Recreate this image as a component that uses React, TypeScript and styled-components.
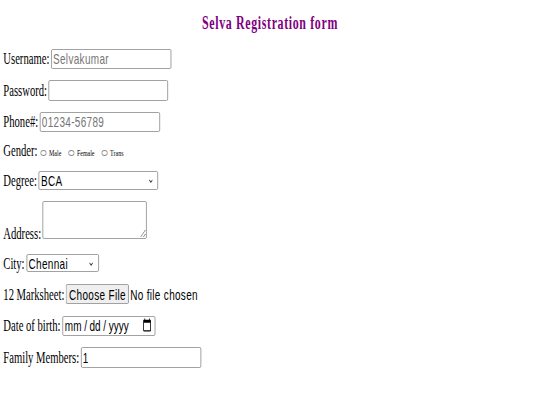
import React from "react";
import styled, { createGlobalStyle } from "styled-components";

const S = 0.664;

const Global = createGlobalStyle`
  html, body { margin: 0; padding: 0; background: #fff; overflow: hidden; }
  body { font-family: "Liberation Serif", "Times New Roman", serif; color: #000; }
`;

const Page = styled.div`
  width: ${540 / S}px;
  box-sizing: border-box;
  padding-top: 12px;
  transform: scaleX(${S});
  transform-origin: 0 0;
`;

const Title = styled.h2`
  margin: 0;
  font: bold 18px/22px "Liberation Serif", "Times New Roman", serif;
  letter-spacing: 0.95px;
  color: #800080;
  text-align: center;
`;

const Form = styled.form`
  display: flex;
  flex-direction: column;
  align-items: flex-start;
  padding-left: 5px;
`;

const Row = styled.div<{ $mt: number; $align?: string }>`
  display: flex;
  align-items: ${(p) => p.$align ?? "baseline"};
  gap: 2.5px;
  margin-top: ${(p) => p.$mt}px;
`;

const Label = styled.label<{ $drop?: boolean }>`
  font-size: 16px;
  line-height: normal;
  white-space: nowrap;
  margin-bottom: ${(p) => (p.$drop ? "-3.8px" : "0")};
`;

const controlFont = `
  font-family: "Liberation Sans", Arial, sans-serif;
  font-size: 15px;
  letter-spacing: 0.5px;
  color: #000;
`;

const TextInput = styled.input<{ $w: number; $h?: number }>`
  ${controlFont}
  box-sizing: border-box;
  width: ${(p) => p.$w}px;
  height: ${(p) => p.$h ?? 20.6}px;
  margin: 0;
  padding: 0 2px;
  border: 1px solid #8f8f8f;
  border-radius: 2px;
  background: #fff;
  &::placeholder {
    color: #757575;
  }
`;

const DateInput = styled(TextInput)`
  letter-spacing: 0;
  &::-webkit-datetime-edit-text {
    padding: 0 3px;
  }
`;

const SelectWrap = styled.span`
  position: relative;
  display: inline-flex;
`;

const Select = styled.select<{ $w: number }>`
  ${controlFont}
  appearance: none;
  box-sizing: border-box;
  width: ${(p) => p.$w}px;
  height: 18.6px;
  margin: 0;
  padding: 0 14px 0 2.5px;
  border: 1px solid #8f8f8f;
  border-radius: 2px;
  background: #fff;
`;

const Chevron = styled.svg`
  position: absolute;
  right: 8px;
  top: 50%;
  width: 6.5px;
  height: 4px;
  margin-top: -1.5px;
  pointer-events: none;
`;

const TextArea = styled.textarea`
  ${controlFont}
  box-sizing: border-box;
  width: 156.6px;
  height: 37.3px;
  margin: 0;
  padding: 2px;
  border: 1px solid #8f8f8f;
  border-radius: 2px;
`;

const FileInput = styled.input`
  ${controlFont}
  width: 200px;
  margin: 0;
  &::file-selector-button {
    font: inherit;
    letter-spacing: inherit;
    color: #000;
    box-sizing: border-box;
    height: 20.3px;
    padding: 0 3.5px;
    margin: 0 2px 0 0;
    border: 1px solid #8f8f8f;
    border-radius: 2px;
    background: #efefef;
  }
`;

const Options = styled.div`
  display: flex;
  align-items: baseline;
  gap: 11px;
  margin-left: 2.3px;
`;

const Option = styled.label`
  display: flex;
  align-items: baseline;
  gap: 4px;
  font-size: 9px;
  line-height: normal;
`;

const Radio = styled.input`
  appearance: none;
  box-sizing: border-box;
  width: 8.5px;
  height: 5.6px;
  margin: 0 0 0.3px 0;
  border: 1px solid #8c8c8c;
  border-radius: 50%;
  background: #fff;
`;

function Dropdown({
  id,
  width,
  value,
  options,
}: {
  id: string;
  width: number;
  value: string;
  options: string[];
}) {
  return (
    <SelectWrap>
      <Select id={id} $w={width} defaultValue={value}>
        {options.map((o) => (
          <option key={o}>{o}</option>
        ))}
      </Select>
      <Chevron viewBox="0 0 8 5">
        <polyline points="1,1 4,4 7,1" fill="none" stroke="#3a3a3a" strokeWidth="1.4" />
      </Chevron>
    </SelectWrap>
  );
}

export default function App() {
  return (
    <>
      <Global />
      <Page>
        <Title>Selva Registration form</Title>
        <Form onSubmit={(e) => e.preventDefault()}>
          <Row $mt={14.5}>
            <Label htmlFor="u">Username:</Label>
            <TextInput id="u" type="text" $w={181} placeholder="Selvakumar" />
          </Row>
          <Row $mt={10.9}>
            <Label htmlFor="p">Password:</Label>
            <TextInput id="p" type="password" $w={180} />
          </Row>
          <Row $mt={11}>
            <Label htmlFor="ph">Phone#:</Label>
            <TextInput id="ph" type="tel" $w={181} placeholder="01234-56789" />
          </Row>
          <Row $mt={9.5}>
            <Label>Gender:</Label>
            <Options>
              <Option>
                <Radio type="radio" name="g" value="male" />
                Male
              </Option>
              <Option>
                <Radio type="radio" name="g" value="female" />
                Female
              </Option>
              <Option>
                <Radio type="radio" name="g" value="trans" />
                Trans
              </Option>
            </Options>
          </Row>
          <Row $mt={11.5}>
            <Label htmlFor="d">Degree:</Label>
            <Dropdown id="d" width={180} value="BCA" options={["BCA", "BSc", "BE"]} />
          </Row>
          <Row $mt={11.3} $align="flex-end">
            <Label htmlFor="a" $drop>
              Address:
            </Label>
            <TextArea id="a" />
          </Row>
          <Row $mt={15}>
            <Label htmlFor="c">City:</Label>
            <Dropdown id="c" width={109} value="Chennai" options={["Chennai", "Madurai", "Coimbatore"]} />
          </Row>
          <Row $mt={11.2}>
            <Label htmlFor="m">12 Marksheet:</Label>
            <FileInput id="m" type="file" />
          </Row>
          <Row $mt={11.4}>
            <Label htmlFor="b">Date of birth:</Label>
            <DateInput id="b" type="date" $w={140} $h={20} />
          </Row>
          <Row $mt={11.6}>
            <Label htmlFor="f">Family Members:</Label>
            <TextInput id="f" type="number" $w={181} defaultValue={1} />
          </Row>
        </Form>
      </Page>
    </>
  );
}
